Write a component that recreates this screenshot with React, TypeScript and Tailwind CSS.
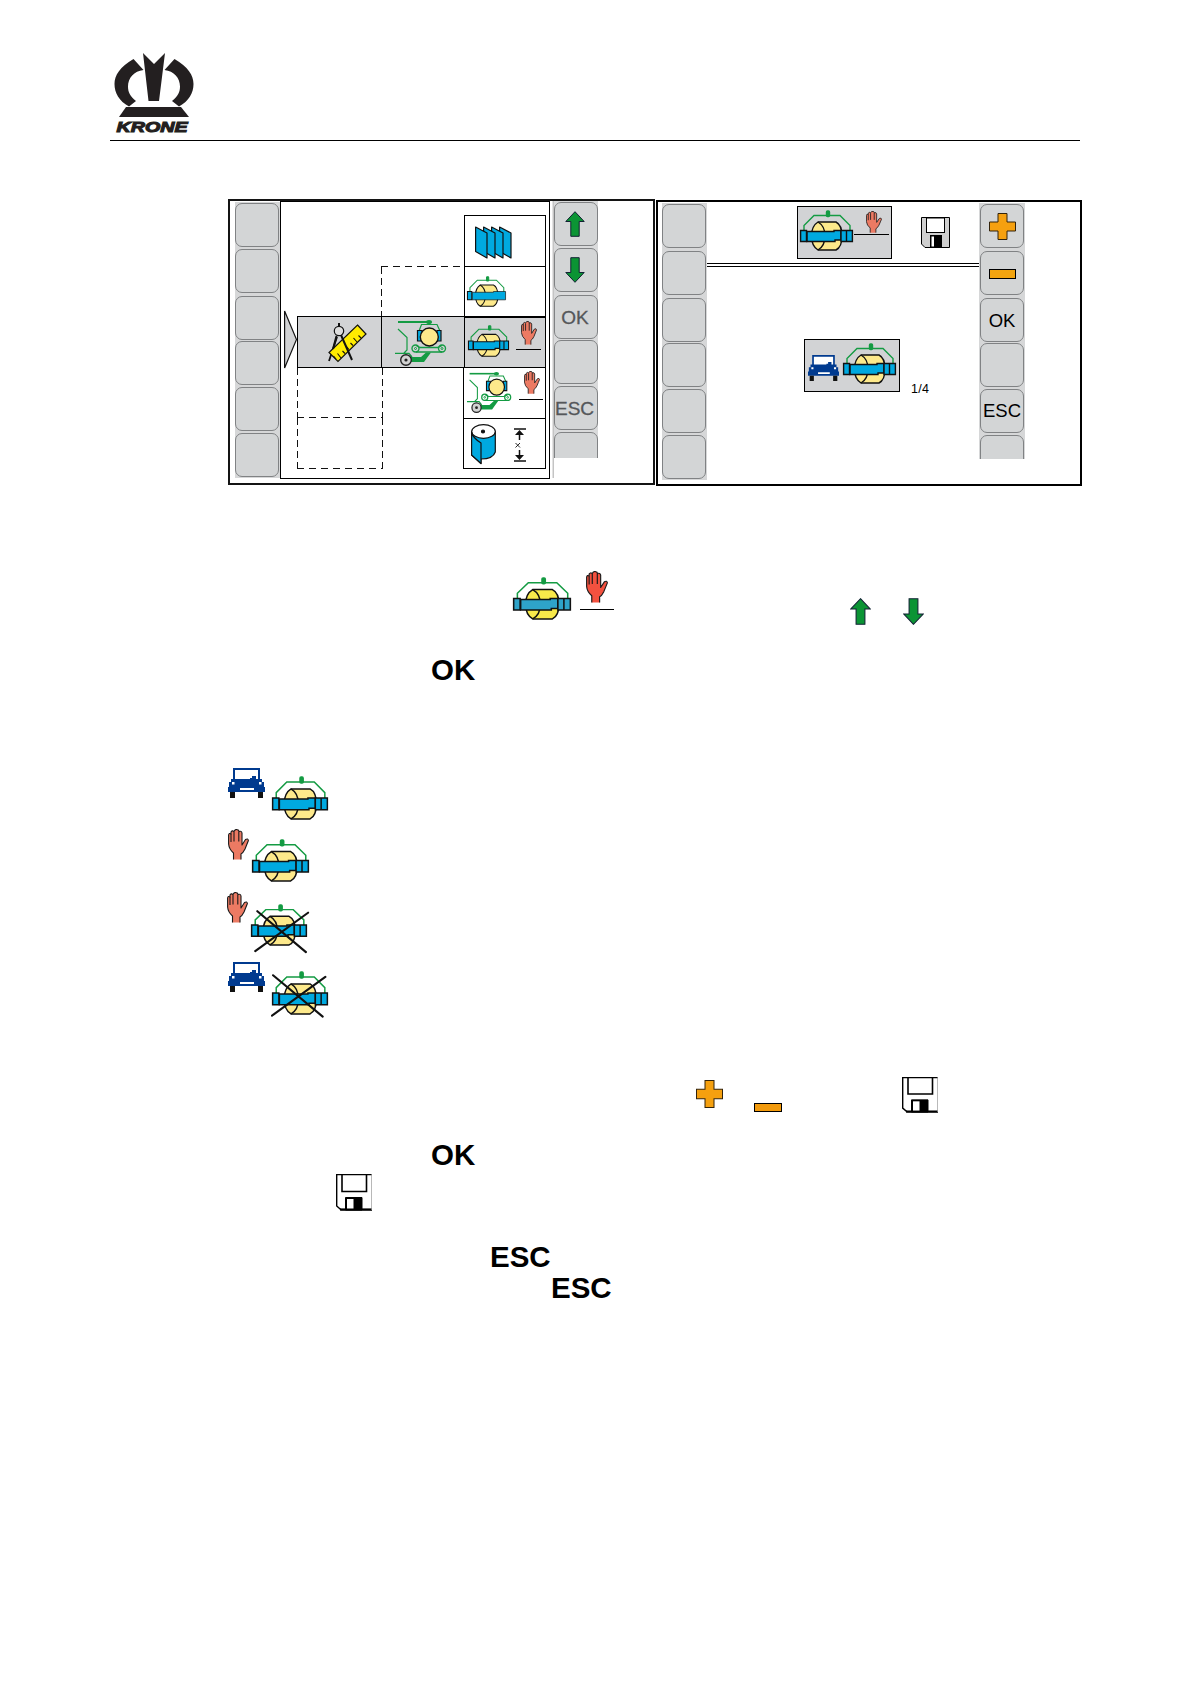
import React from "react";

type P = { className?: string };

function Logo({ className }: P) {
  return (
    <svg viewBox="0 0 80 80" className={className} fill="#231f20">
      <path d="M19.500 6C6 14 0.500 22 0.500 31C0.500 40 5 48 15 53.500L22 48C16 43 14 39 14 33.500C14 25 20 18 29.500 17Z" />
      <path d="M60.500 6C74 14 79.500 22 79.500 31C79.500 40 75 48 65 53.500L58 48C64 43 66 39 66 33.500C66 25 60 18 50.500 17Z" />
      <path d="M29 0L40 11L51 0L45 48H34.500Z" />
      <path d="M12 54H67L75 64H5Z" />
      <text x="2.500" y="78.500" textLength="71" lengthAdjust="spacingAndGlyphs" fontFamily="Liberation Sans, sans-serif" fontWeight="700" fontStyle="italic" fontSize="15.500" stroke="#231f20" strokeWidth="1.100">KRONE</text>
    </svg>
  );
}

type BalerProps = P & { cross?: string; yellow?: string; blue?: string; plainEnd?: boolean };

function Baler({ className, cross, yellow = "#fde98b", blue = "#00a9e0", plainEnd }: BalerProps) {
  return (
    <svg viewBox="0 0 53 41" preserveAspectRatio="none" overflow="visible" className={className} stroke="#111" strokeWidth="1.400">
      <path d="M4 21V15.500L14 5.500H40L50 15.500V21" fill="none" stroke="#149b43" />
      <rect x="26.500" y="1" width="3" height="5.500" rx="1" fill="#149b43" stroke="#149b43" />
      <path d="M18 12H36Q42 15 42 26T36 40H18Q11.500 36 11.500 26T18 12Z" fill={yellow} />
      <path d="M18 12Q25 16 25 26T18 40" fill="none" />
      {plainEnd ? (
        <path d="M7 21.500H36V20.500H52.400V31.500H7Z" fill={blue} strokeWidth="0.900" />
      ) : (
        <>
          <path d="M7 21.500H34V20.500H41V30H35V31.500H7Z" fill={blue} />
          <path d="M41 20.500H52.400V31.500H41Z M46.500 20.500V31.500" fill={blue} />
        </>
      )}
      <path d="M0.600 20.500H6.500V31.500H0.600Z" fill={blue} />
      {cross && <path d={cross} fill="none" strokeWidth="2" strokeLinecap="round" />}
    </svg>
  );
}

function Hand({ className, fill = "#ec7a63" }: P & { fill?: string }) {
  return (
    <svg viewBox="0 0 21 31" preserveAspectRatio="none" className={className} stroke="#1a1a1a" strokeWidth="1.100" strokeLinejoin="round">
      <path d="M5.500 30.500V24Q1 20 0.600 15V6Q1 3.500 3 5V3Q4 1 6 2.500Q7 0 9.300 0.600Q10.800 0.800 11 2.500Q13.500 1.500 14 4V16L17.500 10.500Q20 9 20.400 11.500Q19 15 17 20Q15 24 13 25V30.500" fill={fill} />
      <path d="M3 5V13M6 3V12.500M10.800 2.500V12.500" fill="none" />
    </svg>
  );
}

function Car({ className }: P) {
  return (
    <svg viewBox="0 0 37 30" preserveAspectRatio="none" className={className} fill="#003a8f">
      <path d="M5 0H32V11H34V14H36V19H37V24H0V19H1V14H3V11H5Z" />
      <path d="M7 2H30V11H28V8H24V10H22V11H7Z M4 14H6.500V16.500H4Z M31 14H33.500V16.500H31Z M12 20H26V22H12Z" fill="#fff" />
      <path d="M2 24H7V30H2Z M30 24H35V30H30Z" fill="#111" />
    </svg>
  );
}

function Arrow({ className }: P) {
  return (
    <svg viewBox="0 0 20 26" preserveAspectRatio="none" className={className}>
      <path d="M10 0.700L19.200 10.500H14.200V25.300H5.800V10.500H0.800Z" fill="#0b9434" stroke="#123" strokeWidth="1" />
    </svg>
  );
}

function Plus({ className }: P) {
  return (
    <svg viewBox="0 0 27 27" preserveAspectRatio="none" className={className}>
      <path d="M9 0.500H18V9H26.500V18H18V26.500H9V18H0.500V9H9Z" fill="#f5a00f" stroke="#33230a" strokeWidth="1" />
    </svg>
  );
}

function DiskGray({ className }: P) {
  return (
    <svg viewBox="0 0 29 31" className={className} stroke="#000">
      <path d="M0.500 0.500H28.500V30.500H4L0.500 27Z" fill="#cfcfcf" strokeWidth="1" />
      <rect x="5.500" y="1" width="18" height="14.500" fill="#fff" />
      <rect x="9.500" y="18.500" width="11" height="12" fill="#000" />
      <rect x="10.500" y="19.500" width="2.500" height="10" fill="#fff" stroke="none" />
    </svg>
  );
}

function Disk({ className }: P) {
  return (
    <svg viewBox="0 0 36 37" preserveAspectRatio="none" className={className} fill="none" stroke="#000">
      <path d="M36 0.600H0.700V32L5 35.700H36" strokeWidth="1.400" />
      <path d="M4 35.500H36" strokeWidth="2.200" />
      <path d="M35.500 0V36" stroke="#999" strokeWidth="0.700" />
      <path d="M6 0V17.500H30.500V0" strokeWidth="1.600" />
      <path d="M9.500 36V23.500H26V36Z" fill="#000" />
      <rect x="11" y="25" width="6.500" height="9.500" fill="#fff" stroke="none" />
    </svg>
  );
}

function Compass({ className }: P) {
  return (
    <svg viewBox="0 0 39 40" className={className} stroke="#111" fill="none">
      <path d="M9 14L1 38" strokeWidth="1.800" />
      <path d="M29.500 2L38 11L10 38.500L1 29.500Z" fill="#ffec00" strokeWidth="1.200" />
      <path d="M8 36L5.500 33M13 35L9.500 30.500M17 30.500L14.500 28M21 26.500L18 23M25 22.500L22.500 20M29 19L25.500 15M33 15L30.500 12.500" strokeWidth="1.100" />
      <path d="M8.500 13L5 26M13 12L24 37" strokeWidth="2" />
      <path d="M11 0V4" strokeWidth="2" />
      <circle cx="11" cy="8" r="4.700" fill="#ddd" strokeWidth="1.200" />
    </svg>
  );
}

function Wrapper({ className }: P) {
  return (
    <svg viewBox="0 0 52 47" preserveAspectRatio="none" className={className} fill="none" stroke="#149b43">
      <path d="M3 3H36" strokeWidth="1.800" />
      <ellipse cx="34" cy="3" rx="3" ry="2" fill="#149b43" stroke="none" />
      <path d="M24 12L26.500 5.500H42L45 12" strokeWidth="1.200" />
      <path d="M3 10L12 18.500V31L9 34M0 34.300H14L17 38" strokeWidth="1.200" />
      <path d="M16 38H26L31 33.500H36L29 43H16Z" fill="#149b43" stroke="none" />
      <path d="M21 26.500L25 28.500H43L47 26.500M21 33H47" strokeWidth="1.300" />
      <circle cx="20.500" cy="29.500" r="3.500" strokeWidth="1.400" />
      <circle cx="47" cy="29.500" r="3.500" strokeWidth="1.400" />
      <circle cx="20.500" cy="29.500" r="1" />
      <circle cx="47" cy="29.500" r="1" />
      <path d="M22.500 11.500H27V22H22.500ZM42 11.500H46V22H42Z" fill="#00a9e0" stroke="#111" strokeWidth="1.200" />
      <circle cx="34.300" cy="18" r="9" fill="#fde98b" stroke="#111" strokeWidth="1.400" />
      <circle cx="11" cy="41" r="5.300" fill="#d2d2d2" stroke="#222" strokeWidth="1.400" />
      <circle cx="11" cy="41" r="1.600" fill="#222" stroke="none" />
    </svg>
  );
}

function Layers({ className }: P) {
  return (
    <svg viewBox="0 0 37 33" className={className} fill="#00a9e0" stroke="#111" strokeWidth="1.200" strokeLinejoin="round">
      {[24, 16, 8, 0].map((x) => (
        <path key={x} transform={`translate(${x} 0)`} d="M0.600 1L12 7V32L0.600 25.500Z" />
      ))}
    </svg>
  );
}

function Roll({ className }: P) {
  return (
    <svg viewBox="0 0 25 41" className={className} stroke="#111" strokeWidth="1.200" strokeLinejoin="round">
      <path d="M0.600 7.500V31L10 39.500V35Q22 35 24.300 28V7.500Z" fill="#00a9e0" />
      <ellipse cx="12.500" cy="7.500" rx="11.800" ry="6.800" fill="#fff" />
      <circle cx="12" cy="7.500" r="1.500" fill="#111" />
      <path d="M0.600 8.500Q2 14 10 19V39.500L0.600 31Z" fill="#00a9e0" />
    </svg>
  );
}

function Measure({ className }: P) {
  return (
    <svg viewBox="0 0 12 34" className={className} fill="#111" stroke="#111">
      <path d="M0 1H12M0 33H12M5.500 4V12M5.500 22V30" fill="none" strokeWidth="1.500" />
      <path d="M5.500 2L10 7H1ZM5.500 32L10 27H1Z" stroke="none" />
      <path d="M1.500 15L6 19.500M6 15L1.500 19.500" strokeWidth="0.900" />
    </svg>
  );
}

function Keys({ items, className = "gap-[2px]" }: P & { items: React.ReactNode[] }) {
  return (
    <div className={`flex flex-col ${className}`}>
      {items.map((k, i) => (
        <div
          key={i}
          className="flex h-[44px] w-[44px] shrink-0 items-center justify-center rounded-[7px] border border-[#808284] bg-[#d3d5d6] [&:nth-child(3)]:mt-px [&:nth-child(4)]:-mt-px"
        >
          {k}
        </div>
      ))}
    </div>
  );
}

const EMPTY = [null, null, null, null, null, null];
const FIRST_GAP = "gap-[2px] [&>*:first-child]:mb-px";

function DashH() {
  return <div className="h-px shrink-0 bg-[repeating-linear-gradient(90deg,#111_0_7px,transparent_7px_12px)]" />;
}
function DashV() {
  return <div className="h-full w-px shrink-0 bg-[repeating-linear-gradient(180deg,#111_0_7px,transparent_7px_11px)]" />;
}

function MenuPanel() {
  return (
    <section className="flex h-[286px] w-[427px] items-start border-2 border-[#141414]">
      <div className="ml-[5px] mt-px h-[276px] w-[45px] bg-[#d6d7d8] pt-px">
        <Keys items={EMPTY} />
      </div>
      <div className="flex h-[278px] w-[270px] items-start border border-black">
        <svg viewBox="0 0 13 59" className="ml-[3px] mt-[108px] h-[59px] w-[13px]">
          <path d="M0.600 1L12.500 29.500L0.600 58Z" fill="#d2d3d5" stroke="#111" strokeWidth="1.200" />
        </svg>
        <div className="mt-[114px] flex w-[84px] flex-col">
          <div className="flex h-[52px] border-y border-l border-black bg-[#d2d3d5] pl-[30px] pt-[6px]">
            <Compass className="h-[40px] w-[39px]" />
          </div>
          <div className="-mr-[2px] flex flex-col">
            <div className="flex h-[49px] justify-between"><DashV /><DashV /></div>
            <DashH />
            <div className="flex h-[50px] justify-between"><DashV /><DashV /></div>
            <DashH />
          </div>
        </div>
        <div className="mt-[64px] flex w-[83px] flex-col">
          <DashH />
          <div className="flex h-[49px]"><DashV /></div>
          <div className="flex h-[52px] border-y border-l border-black bg-[#d2d3d5] pl-[13px] pt-[2px]">
            <Wrapper className="h-[47px] w-[52px]" />
          </div>
        </div>
        <div className="mt-[13px] flex w-[82px] flex-col">
          <div className="flex h-[51px] border-x border-t border-black pl-[10px] pt-[10px]">
            <Layers className="h-[33px] w-[37px]" />
          </div>
          <div className="flex h-[50px] border-x border-t border-black pl-[2px] pt-[9px]">
            <Baler className="h-[31px] w-[39px]" plainEnd />
          </div>
          <div className="flex h-[52px] border-x border-y border-t-2 border-black bg-[#d2d3d5] pl-[3px]">
            <Baler className="mt-[7px] h-[32px] w-[41px]" />
            <div className="ml-[7px] mt-[3px] h-[29px] w-[25px] border-b border-black pl-[5px]">
              <Hand className="h-[24px] w-[16px]" />
            </div>
          </div>
          <div className="-ml-px flex h-[50px] border-x border-black pl-[3px]">
            <Wrapper className="mt-[3px] h-[42px] w-[45px]" />
            <div className="ml-[7px] mt-[3px] h-[29px] w-[24px] border-b border-black pl-[5px]">
              <Hand className="h-[23px] w-[16px]" />
            </div>
          </div>
          <div className="-ml-px flex h-[51px] border border-black pl-[7px]">
            <Roll className="mt-[5px] h-[41px] w-[25px]" />
            <Measure className="ml-[18px] mt-[9px] h-[34px] w-[12px]" />
          </div>
        </div>
      </div>
      <div className="ml-[2px] h-[277px] w-[2px] border-r border-[#c4c4c4] bg-[#e2e2e2]" />
      <div className="h-[257px] w-[44px] overflow-hidden bg-[#d9dadb] pt-px">
        <Keys
          className="gap-[2px]"
          items={[
            <Arrow className="mr-[2px] h-[26px] w-[20px]" />,
            <Arrow className="mr-[2px] h-[26px] w-[20px] rotate-180" />,
            <span className="pr-[2px] text-[19px] leading-none text-[#55575a] [-webkit-text-stroke:0.3px_#55575a]">OK</span>,
            null,
            <span className="-ml-[3px] text-[19px] leading-none text-[#55575a] [-webkit-text-stroke:0.3px_#55575a]">ESC</span>,
            null,
          ]}
        />
      </div>
    </section>
  );
}

function SettingPanel() {
  return (
    <section className="ml-px mt-px flex h-[286px] w-[426px] items-start border-2 border-black">
      <div className="ml-[4px] mt-px h-[277px] w-[45px] bg-[#d6d7d8] pt-px">
        <Keys items={EMPTY} className={FIRST_GAP} />
      </div>
      <div className="flex w-[272px] flex-col">
        <div className="flex h-[61px] items-start pl-[90px] pt-[4px]">
          <div className="flex h-[53px] w-[95px] border border-black bg-[#d2d3d5] pl-[2px]">
            <Baler className="mt-[3px] h-[41px] w-[53px]" />
            <div className="ml-px mt-[4px] h-[24px] w-[35px] border-b border-black pl-[12px]">
              <Hand className="h-[22px] w-[16px]" />
            </div>
          </div>
          <DiskGray className="ml-[29px] mt-[11px] h-[31px] w-[29px]" />
        </div>
        <div className="h-[4px] w-full border-y border-black" />
        <div className="flex items-start pl-[97px] pt-[72px]">
          <div className="flex h-[53px] w-[96px] border border-black bg-[#d2d3d5] pl-[3px]">
            <Car className="mt-[15px] h-[26px] w-[31px]" />
            <Baler className="ml-[4px] mt-[3px] h-[41px] w-[53px]" />
          </div>
          <span className="ml-[11px] mt-[43px] text-[12.500px] leading-[14px] tracking-[0.3px]">1/4</span>
        </div>
      </div>
      <div className="mt-px h-[256px] w-[46px] overflow-hidden bg-[#d6d7d8] pl-px pt-px">
        <Keys
          className={FIRST_GAP}
          items={[
            <Plus className="h-[27px] w-[27px]" />,
            <div className="mt-px h-[10px] w-[27px] border border-black bg-[#f2a410]" />,
            <span className="pt-[2px] text-[18.500px] leading-none">OK</span>,
            null,
            <span className="pt-px text-[18.500px] leading-none">ESC</span>,
            null,
          ]}
        />
      </div>
    </section>
  );
}

const CROSS_A = "M6 7L52 47M54 8.500L4 46";
const CROSS_B = "M1 4L48 42.500M50.500 5.500L0 41.500";

export default function App() {
  return (
    <main className="flex h-[1684px] w-[1190px] flex-col overflow-hidden bg-white font-['Liberation_Sans',Arial,sans-serif] text-black">
      <header className="ml-[110px] h-[141px] w-[970px] shrink-0 border-b border-black pl-[4px] pt-[53px]">
        <Logo className="h-[80px] w-[80px]" />
      </header>

      <div className="ml-[228px] mt-[58px] flex h-[287px] shrink-0 items-start">
        <MenuPanel />
        <SettingPanel />
      </div>

      <div className="ml-[513px] mt-[85px] flex h-[54px] shrink-0 items-start">
        <Baler className="mt-[6px] h-[43px] w-[58px]" yellow="#f8e94a" blue="#2ea3c9" />
        <div className="ml-[9px] h-[39px] w-[34px] border-b border-black pl-[6px]">
          <Hand className="h-[32px] w-[22px]" fill="#f3513f" />
        </div>
        <Arrow className="ml-[236px] mt-[27px] h-[27px] w-[21px]" />
        <Arrow className="ml-[32px] mt-[27px] h-[27px] w-[21px] rotate-180" />
      </div>

      <div className="ml-[431px] mt-[31px] h-[28px] shrink-0 text-[29.500px] font-bold leading-[28px]">OK</div>

      <ul className="ml-[227px] mt-[84px] flex h-[250px] shrink-0 flex-col">
        <li className="flex h-[61px] items-start pl-px">
          <Car className="h-[30px] w-[37px]" />
          <Baler className="ml-[7px] mt-[8px] h-[44px] w-[56px]" />
        </li>
        <li className="flex h-[63px] items-start pl-px">
          <Hand className="h-[31px] w-[21px]" />
          <Baler className="ml-[3px] mt-[10px] h-[43px] w-[57px]" />
        </li>
        <li className="flex h-[70px] items-start">
          <Hand className="h-[31px] w-[21px]" />
          <Baler className="ml-[3px] mt-[12px] h-[42px] w-[56px]" cross={CROSS_A} />
        </li>
        <li className="flex h-[56px] items-start pl-px">
          <Car className="h-[30px] w-[37px]" />
          <Baler className="ml-[7px] mt-[9px] h-[44px] w-[56px]" cross={CROSS_B} />
        </li>
      </ul>

      <div className="ml-[696px] mt-[59px] flex h-[37px] shrink-0 items-start">
        <Plus className="mt-[3px] h-[28px] w-[27px]" />
        <div className="ml-[31px] mt-[26px] h-[9px] w-[28px] border border-black bg-[#f29a0c]" />
        <Disk className="ml-[120px] h-[36px] w-[36px]" />
      </div>

      <div className="ml-[431px] mt-[27px] h-[28px] shrink-0 text-[29.500px] font-bold leading-[28px]">OK</div>
      <Disk className="ml-[336px] mt-[5px] h-[37px] w-[36px] shrink-0" />
      <div className="ml-[490px] mt-[32px] h-[31px] shrink-0 text-[29.500px] font-bold leading-[28px]">ESC</div>
      <div className="ml-[551px] h-[31px] shrink-0 text-[29.500px] font-bold leading-[28px]">ESC</div>
    </main>
  );
}
